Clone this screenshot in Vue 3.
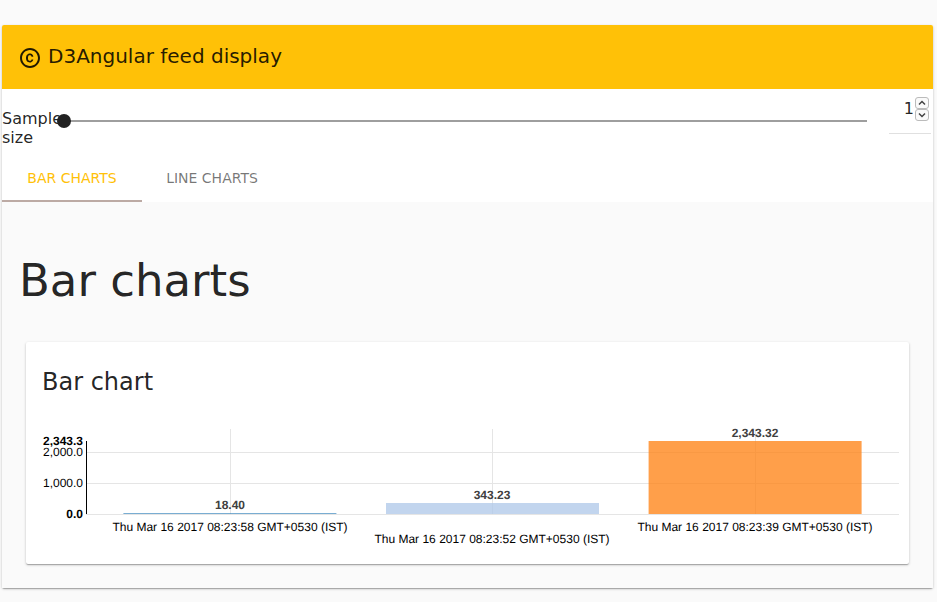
<script setup>
import { computed, onBeforeUnmount, onMounted, ref } from 'vue'

const sampleSize = ref(1)
const activeTab = ref('Bar')
const tabs = ['Bar', 'Line']

const step = (delta) => {
  sampleSize.value = Math.min(100, Math.max(1, Number(sampleSize.value) + delta))
}

const samples = [
  { value: 18.4, label: 'Thu Mar 16 2017 08:23:58 GMT+0530 (IST)', color: '#1f77b4' },
  { value: 343.23, label: 'Thu Mar 16 2017 08:23:52 GMT+0530 (IST)', color: '#aec7e8' },
  { value: 2343.32, label: 'Thu Mar 16 2017 08:23:39 GMT+0530 (IST)', color: '#ff7f0e' },
]

const chartBox = ref(null)
const width = ref(857)
const axisX = 44
const baseY = 102
const barArea = 73
const maxValue = Math.max(...samples.map((s) => s.value))

const toY = (v) => Math.round(baseY - (v / maxValue) * barArea)
const format = (v, digits) =>
  v.toLocaleString('en-US', { minimumFractionDigits: digits, maximumFractionDigits: digits })

const ticks = [0, 1000, 2000].map((v) => ({ v, y: toY(v) }))

const bars = computed(() => {
  const plot = width.value - axisX
  const band = plot * 0.323
  const barWidth = plot * 0.262
  return samples.map((s, i) => {
    const x = axisX + plot * 0.046 + i * band
    const height = Math.max(1, baseY - toY(s.value))
    return {
      ...s,
      x,
      barWidth,
      height,
      y: baseY - height,
      center: Math.round(x + barWidth / 2),
      labelY: i % 2 ? 131 : 119,
    }
  })
})

let observer
onMounted(() => {
  width.value = chartBox.value.clientWidth
  observer = new ResizeObserver(() => {
    if (chartBox.value) width.value = chartBox.value.clientWidth
  })
  observer.observe(chartBox.value)
})
onBeforeUnmount(() => observer?.disconnect())
</script>

<template>
  <main class="page">
    <section class="panel">
      <header class="toolbar">
        <svg class="logo" viewBox="0 0 24 24" aria-hidden="true">
          <path
            d="M10.08 10.86c.05-.33.16-.62.3-.87s.34-.46.59-.62c.24-.15.54-.22.91-.23.23.01.44.05.63.13.2.09.38.21.52.36s.25.33.34.53.13.42.14.64h1.79c-.02-.47-.11-.9-.28-1.29s-.4-.73-.7-1.01-.66-.5-1.08-.66-.88-.23-1.39-.23c-.65 0-1.22.11-1.7.34s-.88.53-1.2.92-.56.84-.71 1.36S8 11.29 8 11.87v.27c0 .58.08 1.12.23 1.64s.39.97.71 1.35.72.69 1.2.91 1.05.34 1.7.34c.47 0 .91-.08 1.32-.23s.77-.36 1.08-.63.56-.58.74-.94.29-.74.3-1.15h-1.79c-.01.21-.06.4-.15.58s-.21.33-.36.46-.32.23-.52.3c-.19.07-.39.09-.6.1-.36-.01-.66-.08-.89-.23-.25-.16-.45-.37-.59-.62s-.25-.55-.3-.88-.08-.67-.08-1v-.27c0-.35.03-.68.08-1.01zM12 2C6.48 2 2 6.48 2 12s4.48 10 10 10 10-4.48 10-10S17.52 2 12 2zm0 18c-4.41 0-8-3.59-8-8s3.59-8 8-8 8 3.59 8 8-3.59 8-8 8z"
          />
        </svg>
        <h2 class="toolbar-title">D3Angular feed display</h2>
      </header>

      <div class="controls">
        <label class="slider-label" for="sample-range">Sample size</label>
        <input
          id="sample-range"
          v-model.number="sampleSize"
          class="slider"
          type="range"
          min="1"
          max="100"
        />
        <div class="stepper">
          <input
            v-model.number="sampleSize"
            class="stepper-input"
            type="number"
            min="1"
            max="100"
            aria-label="Sample size value"
          />
          <div class="stepper-buttons">
            <button type="button" aria-label="Increase" @click="step(1)">
              <svg viewBox="0 0 10 8"><path d="M2 5.5 5 2.5 8 5.5" /></svg>
            </button>
            <button type="button" aria-label="Decrease" @click="step(-1)">
              <svg viewBox="0 0 10 8"><path d="M2 2.5 5 5.5 8 2.5" /></svg>
            </button>
          </div>
        </div>
      </div>

      <nav class="tabs" role="tablist">
        <button
          v-for="tab in tabs"
          :key="tab"
          type="button"
          role="tab"
          class="tab"
          :class="{ active: tab === activeTab }"
          :aria-selected="tab === activeTab"
          @click="activeTab = tab"
        >
          {{ tab }} charts
        </button>
      </nav>

      <div class="content">
        <h1 class="heading">{{ activeTab }} charts</h1>
        <article class="card">
          <h3 class="card-title">{{ activeTab }} chart</h3>
          <div ref="chartBox" class="chart-box">
            <svg class="chart" :width="width" height="136" role="img" aria-label="Feed values by time">
              <g class="grid">
                <line v-for="t in ticks" :key="t.v" :x1="axisX" :x2="width" :y1="t.y" :y2="t.y" />
                <line v-for="b in bars" :key="b.label" :x1="b.center" :x2="b.center" y1="17" :y2="baseY" />
              </g>
              <line class="axis" :x1="axisX" :x2="axisX" :y1="baseY - barArea" :y2="baseY" />
              <g class="y-labels">
                <text
                  v-for="t in ticks"
                  :key="t.v"
                  x="41"
                  :y="t.y + 4"
                  :class="{ bold: t.v === 0 }"
                >{{ format(t.v, 1) }}</text>
                <text x="41" :y="baseY - barArea + 4" class="bold">{{ format(maxValue, 1) }}</text>
              </g>
              <g v-for="b in bars" :key="b.label">
                <rect
                  class="bar"
                  :class="{ thin: b.height === 1 }"
                  :x="b.x"
                  :y="b.y"
                  :width="b.barWidth"
                  :height="b.height"
                  :fill="b.color"
                />
                <text class="value" :x="b.center" :y="b.y - 4">{{ format(b.value, 2) }}</text>
                <text class="x-label" :x="b.center" :y="b.labelY">{{ b.label }}</text>
              </g>
            </svg>
          </div>
        </article>
      </div>
    </section>
  </main>
</template>

<style>
body {
  margin: 0;
  background: #fafafa;
}
</style>

<style scoped>
.page {
  padding: 25px 4px 13px 2px;
  font-family: 'DejaVu Sans', sans-serif;
  color: rgba(0, 0, 0, 0.87);
}
.panel,
.card {
  border-radius: 2px;
  box-shadow:
    0 1px 3px 0 rgba(0, 0, 0, 0.2),
    0 1px 1px 0 rgba(0, 0, 0, 0.14),
    0 2px 1px -1px rgba(0, 0, 0, 0.12);
}
.panel {
  background: #fff;
}
.toolbar {
  display: flex;
  align-items: center;
  gap: 6px;
  height: 64px;
  padding: 0 16px;
  box-sizing: border-box;
  border-radius: 2px 2px 0 0;
  background: #ffc107;
}
.logo {
  width: 24px;
  height: 24px;
  margin-top: 2px;
  fill: currentColor;
}
.toolbar-title {
  margin: 0;
  padding-bottom: 2px;
  font-size: 20px;
  font-weight: 400;
}
.controls {
  display: flex;
  align-items: flex-start;
  height: 65px;
  padding-right: 2px;
}
.slider-label {
  width: 55px;
  padding-top: 20px;
  font-size: 16px;
  line-height: 19px;
}
.slider {
  flex: 1;
  min-width: 0;
  height: 14px;
  margin: 25px 22px 0 0;
  appearance: none;
  background: none;
}
.slider::-webkit-slider-runnable-track {
  height: 14px;
  background: linear-gradient(#9e9e9e, #9e9e9e) 7px 6px / 100% 2px no-repeat;
}
.slider::-webkit-slider-thumb {
  width: 14px;
  height: 14px;
  border: 0;
  border-radius: 50%;
  appearance: none;
  background: #212121;
}
.stepper {
  display: flex;
  align-items: center;
  gap: 1px;
  width: 42px;
  height: 45px;
  padding-right: 2px;
  padding-bottom: 5px;
  box-sizing: border-box;
  border-bottom: 1px solid #e0e0e0;
}
.stepper-input {
  flex: 1;
  min-width: 0;
  padding: 0;
  border: 0;
  background: none;
  color: inherit;
  font: inherit;
  font-size: 16px;
  text-align: right;
  appearance: textfield;
}
.stepper-input::-webkit-inner-spin-button {
  appearance: none;
}
.stepper-buttons {
  display: flex;
  flex-direction: column;
}
.stepper-buttons button {
  display: flex;
  width: 14px;
  height: 12px;
  padding: 1px 0;
  border: 1px solid #bbb;
  border-radius: 3px;
  background: #fafafa;
}
.stepper-buttons svg {
  width: 100%;
  height: 8px;
  fill: none;
  stroke: #444;
  stroke-width: 1.5;
}
.tabs {
  display: flex;
}
.tab {
  min-width: 140px;
  height: 48px;
  padding: 2px 24px 0;
  border: 0;
  border-bottom: 2px solid transparent;
  background: none;
  color: rgba(0, 0, 0, 0.54);
  font-family: inherit;
  font-size: 14px;
  text-transform: uppercase;
}
.tab.active {
  border-bottom-color: #bcaaa4;
  color: #ffc107;
}
.content {
  padding: 49px 24px 24px;
  background: #fafafa;
}
.heading {
  margin: 0 0 31px -7px;
  font-size: 45px;
  font-weight: 400;
  line-height: 60px;
}
.card {
  padding: 24px 10px 16px 16px;
  background: #fff;
}
.card-title {
  margin: 0 0 14px;
  font-size: 24px;
  font-weight: 400;
  line-height: 32px;
}
.chart-box {
  min-width: 0;
  overflow: hidden;
}
.chart {
  display: block;
  font-family: 'Liberation Sans', Arial, sans-serif;
  font-size: 12px;
  text-rendering: geometricPrecision;
}
.grid line {
  stroke: #e5e5e5;
  shape-rendering: crispEdges;
}
.axis {
  stroke: #000;
  shape-rendering: crispEdges;
}
.y-labels text {
  text-anchor: end;
}
.bold {
  font-weight: 700;
}
.bar {
  fill-opacity: 0.75;
}
.bar.thin {
  fill-opacity: 0.6;
}
.value {
  fill: #404040;
  font-weight: 700;
  text-anchor: middle;
}
.x-label {
  text-anchor: middle;
}
</style>
